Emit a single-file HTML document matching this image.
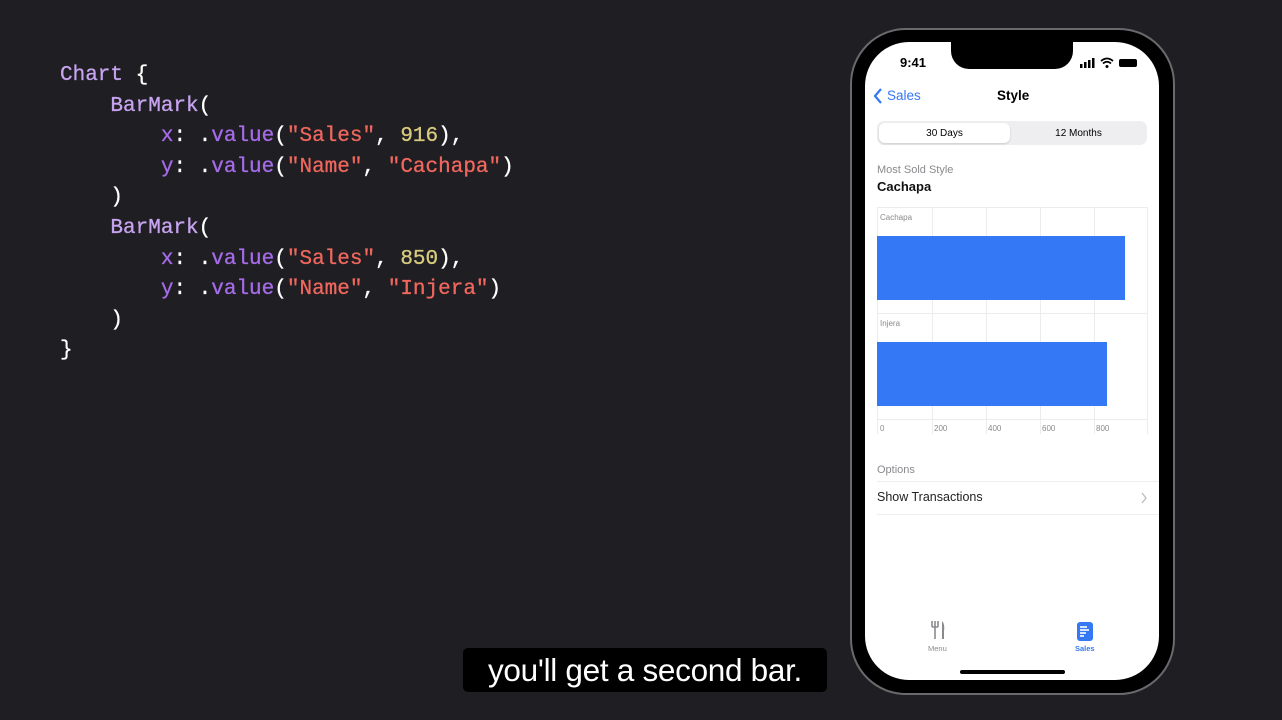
<!DOCTYPE html>
<html><head><style>
*{margin:0;padding:0;box-sizing:border-box}
body{width:1282px;height:720px;background:#1f1e23;position:relative;overflow:hidden;font-family:"Liberation Sans",sans-serif}
.code{position:absolute;left:60px;top:61px;font-family:"Liberation Mono",monospace;font-size:21px;line-height:30.6px;color:#fff;white-space:pre;-webkit-text-stroke:0.3px currentColor}
.k{color:#c7a3f0}.p{color:#a56be8}.s{color:#f0675e}.n{color:#d8cb7e}
.phone{position:absolute;left:850px;top:28px;width:325px;height:667px;border-radius:56px;background:#000;border:2px solid #6a6a6e}
.screen{position:absolute;left:865px;top:42px;width:294px;height:638px;border-radius:44px;background:#fff;overflow:hidden}
.notch{position:absolute;left:86px;top:0;width:122px;height:27px;background:#000;border-radius:0 0 18px 18px}
.abs{position:absolute}
.cap{position:absolute;left:463px;top:648px;width:364px;height:44px;background:#000;border-radius:5px;color:#fff;font-size:31.5px;text-align:center;line-height:44px;letter-spacing:-0.3px}
</style></head><body>
<div class="code"><span class="k">Chart</span> {
    <span class="k">BarMark</span>(
        <span class="p">x</span>: .<span class="p">value</span>(<span class="s">"Sales"</span>, <span class="n">916</span>),
        <span class="p">y</span>: .<span class="p">value</span>(<span class="s">"Name"</span>, <span class="s">"Cachapa"</span>)
    )
    <span class="k">BarMark</span>(
        <span class="p">x</span>: .<span class="p">value</span>(<span class="s">"Sales"</span>, <span class="n">850</span>),
        <span class="p">y</span>: .<span class="p">value</span>(<span class="s">"Name"</span>, <span class="s">"Injera"</span>)
    )
}</div>
<div class="phone"></div>
<div class="screen">
 <div class="notch"></div>
 <div class="abs" style="left:35px;top:13px;font-size:13px;font-weight:bold">9:41</div>
 <svg class="abs" style="left:215px;top:15px" width="60" height="12"><rect x="0" y="7" width="2.5" height="4" fill="#000"/><rect x="4" y="5" width="2.5" height="6" fill="#000"/><rect x="8" y="3" width="2.5" height="8" fill="#000"/><rect x="12" y="1" width="2.5" height="10" fill="#000"/><path d="M21 4 Q27 -1 33 4 M23 6.5 Q27 3 31 6.5" stroke="#000" stroke-width="1.8" fill="none"/><circle cx="27" cy="9.5" r="1.5"/><rect x="39" y="2" width="18" height="8" rx="2" fill="#000"/></svg>
 <svg class="abs" style="left:7px;top:45px" width="12" height="18"><path d="M9 2 L3 9 L9 16" stroke="#3478f6" stroke-width="2.2" fill="none"/></svg>
 <div class="abs" style="left:22px;top:46px;font-size:13.5px;color:#3478f6">Sales</div>
 <div class="abs" style="left:132px;top:46px;font-size:13.5px;font-weight:bold">Style</div>
 <div class="abs" style="left:12px;top:79px;width:270px;height:24px;background:#eeeef0;border-radius:7px"></div>
 <div class="abs" style="left:14px;top:81px;width:131px;height:20px;background:#fff;border-radius:6px;box-shadow:0 1px 2px rgba(0,0,0,.15);font-size:10px;text-align:center;line-height:22px">30 Days</div>
 <div class="abs" style="left:147px;top:81px;width:133px;height:20px;font-size:10px;text-align:center;line-height:22px">12 Months</div>
 <div class="abs" style="left:12px;top:122px;font-size:11px;color:#8a8a8e">Most Sold Style</div>
 <div class="abs" style="left:12px;top:137px;font-size:13px;font-weight:bold;color:#111">Cachapa</div>
 <svg class="abs" style="left:0;top:160px" width="294" height="240">
  <g stroke="#ececec" stroke-width="1">
   <line x1="12.5" y1="5" x2="12.5" y2="232"/><line x1="67.5" y1="5" x2="67.5" y2="232"/><line x1="121.5" y1="5" x2="121.5" y2="232"/><line x1="175.5" y1="5" x2="175.5" y2="232"/><line x1="229.5" y1="5" x2="229.5" y2="232"/><line x1="282.5" y1="5" x2="282.5" y2="232"/>
   <line x1="12" y1="5.5" x2="283" y2="5.5"/><line x1="12" y1="111.5" x2="283" y2="111.5"/><line x1="12" y1="217.5" x2="283" y2="217.5"/>
  </g>
  <rect x="12" y="34" width="248" height="64" fill="#3478f6"/>
  <rect x="12" y="140" width="230" height="64" fill="#3478f6"/>
  <g font-size="8" fill="#8a8a8e" font-family="Liberation Sans"><text x="15" y="18">Cachapa</text><text x="15" y="124">Injera</text>
  <text x="15" y="229">0</text><text x="69" y="229">200</text><text x="123" y="229">400</text><text x="177" y="229">600</text><text x="231" y="229">800</text></g>
 </svg>
 <div class="abs" style="left:12px;top:422px;font-size:11px;color:#8a8a8e">Options</div>
 <div class="abs" style="left:12px;top:439px;width:282px;border-top:1px solid #eee"></div>
 <div class="abs" style="left:12px;top:448px;font-size:12.5px;color:#222">Show Transactions</div>
 <svg class="abs" style="left:275px;top:450px" width="8" height="12"><path d="M2 1 L6 6 L2 11" stroke="#bbb" stroke-width="1.3" fill="none"/></svg>
 <div class="abs" style="left:12px;top:472px;width:282px;border-top:1px solid #eee"></div>
 <svg class="abs" style="left:65px;top:578px" width="16" height="20"><g stroke="#8a8a8e" stroke-width="1.6" fill="none"><path d="M2 1v6M5 1v18M8 1v6M2 7h6"/></g><path d="M12 1 Q15 4 14 11 L14 19 L12 19Z" fill="#8a8a8e"/></svg>
 <div class="abs" style="left:63px;top:602px;font-size:7.5px;color:#8a8a8e">Menu</div>
 <svg class="abs" style="left:212px;top:580px" width="16" height="19"><rect width="16" height="19" rx="3" fill="#3478f6"/><g stroke="#fff" stroke-width="1.6"><line x1="3" y1="5" x2="10" y2="5"/><line x1="3" y1="8" x2="12" y2="8"/><line x1="3" y1="11" x2="9" y2="11"/><line x1="3" y1="14" x2="7" y2="14"/></g></svg>
 <div class="abs" style="left:210px;top:602px;font-size:7.5px;color:#3478f6;font-weight:bold">Sales</div>
 <div class="abs" style="left:95px;top:628px;width:105px;height:4px;background:#000;border-radius:2px"></div>
</div>
<div class="cap">you'll get a second bar.</div>
</body></html>
